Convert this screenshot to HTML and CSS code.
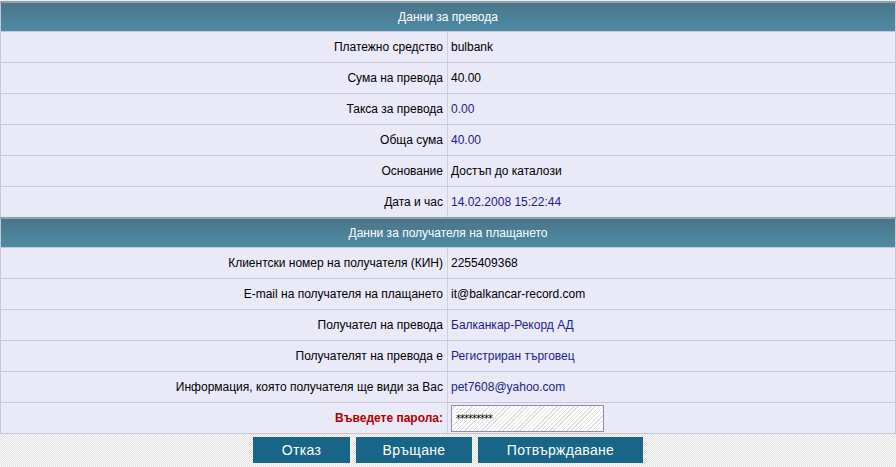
FILE: index.html
```html
<!DOCTYPE html>
<html lang="bg">
<head>
<meta charset="utf-8">
<title>Данни за превода</title>
<link rel="stylesheet" href="styles.css">
</head>
<body>
<div class="page">
  <table class="data">
    <tr class="head"><th colspan="2">Данни за превода</th></tr>
    <tr><td class="lbl">Платежно средство</td><td class="val">bulbank</td></tr>
    <tr><td class="lbl">Сума на превода</td><td class="val">40.00</td></tr>
    <tr><td class="lbl">Такса за превода</td><td class="val blue">0.00</td></tr>
    <tr><td class="lbl">Обща сума</td><td class="val blue">40.00</td></tr>
    <tr><td class="lbl">Основание</td><td class="val">Достъп до каталози</td></tr>
    <tr><td class="lbl">Дата и час</td><td class="val blue">14.02.2008 15:22:44</td></tr>
    <tr class="head"><th colspan="2">Данни за получателя на плащането</th></tr>
    <tr><td class="lbl">Клиентски номер на получателя (КИН)</td><td class="val">2255409368</td></tr>
    <tr><td class="lbl">E-mail на получателя на плащането</td><td class="val">it@balkancar-record.com</td></tr>
    <tr><td class="lbl">Получател на превода</td><td class="val blue">Балканкар-Рекорд АД</td></tr>
    <tr><td class="lbl">Получателят на превода е</td><td class="val blue">Регистриран търговец</td></tr>
    <tr><td class="lbl">Информация, която получателя ще види за Вас</td><td class="val blue">pet7608@yahoo.com</td></tr>
    <tr class="last"><td class="lbl pw">Въведете парола:</td><td class="val"><input class="pass" type="text" value="*********" readonly></td></tr>
  </table>
  <div class="buttons">
    <button class="btn b1" type="button">Отказ</button>
    <button class="btn b2" type="button">Връщане</button>
    <button class="btn b3" type="button">Потвърждаване</button>
  </div>
</div>
</body>
</html>
```
FILE: styles.css
```css
html, body {
  margin: 0;
  padding: 0;
}
body {
  width: 896px;
  height: 467px;
  overflow: hidden;
  font-family: Tahoma, "Liberation Sans", "DejaVu Sans", sans-serif;
  font-size: 12px;
  color: #000;
  background-color: #fff;
  background-image: repeating-conic-gradient(#dcdcdc 0 25%, #ffffff 0 50%);
  background-size: 2px 2px;
}
.page {
  width: 896px;
}
.data {
  width: 896px;
  border-collapse: collapse;
  background: #e9e9f8;
  border-left: 1px solid #c8c8d4;
  border-right: 1px solid #c8c8d4;
  margin-top: 1px;
}
.head th {
  height: 28px;
  padding: 0;
  font-weight: normal;
  color: #ffffff;
  text-align: center;
  background: linear-gradient(#4b7489, #4e8ba6);
  border-top: 2px solid #8fa1a6;
  border-bottom: 1px solid #c8c8d4;
}
.data td {
  height: 30px;
  padding: 0;
  border-bottom: 1px solid #c6c6d6;
  white-space: nowrap;
}
.lbl {
  width: 442px;
  text-align: right;
  padding-right: 4px !important;
  border-right: 1px solid #d0d0dc;
}
.val {
  padding-left: 3px !important;
  text-align: left;
}
.blue {
  color: #1c1c8c;
}
.pw {
  color: #b00000;
  font-weight: bold;
}
.pass {
  display: block;
  box-sizing: border-box;
  width: 153px;
  height: 27px;
  margin: 0;
  padding: 0 4px;
  border: 1px solid #8a8ea8;
  background: repeating-linear-gradient(135deg, #ffffff 0 2px, #dedede 2px 3px);
  font-size: 10px;
  letter-spacing: -1px;
  color: #000;
  font-family: "DejaVu Sans", sans-serif;
  outline: none;
}
.buttons {
  display: flex;
  justify-content: center;
  gap: 6px;
  padding-top: 3px;
}
.btn {
  height: 26px;
  border: 0;
  margin: 0;
  padding: 0;
  background: #196587;
  color: #ffffff;
  font-family: Tahoma, "Liberation Sans", "DejaVu Sans", sans-serif;
  font-size: 14px;
  letter-spacing: 0.3px;
}
.b1 { width: 97px; }
.b2 { width: 116px; }
.b3 { width: 165px; }
```
